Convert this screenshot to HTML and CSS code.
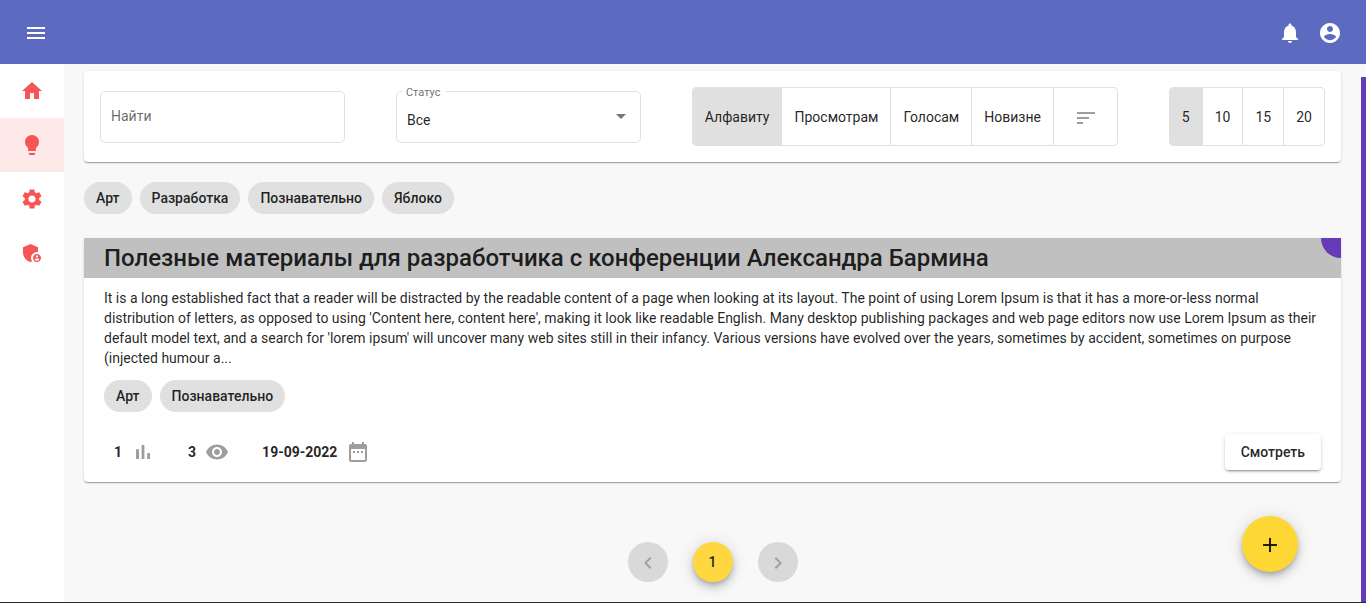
FILE: index.html
```html
<!DOCTYPE html>
<html lang="ru">
<head>
<meta charset="utf-8">
<meta name="viewport" content="width=device-width, initial-scale=1">
<title>Материалы</title>
<link rel="stylesheet" href="styles.css">
</head>
<body>
<header class="toolbar">
  <button class="icon-button" type="button" aria-label="Меню">
    <svg class="icon" viewBox="0 0 24 24"><path d="M3 18h18v-2H3v2zm0-5h18v-2H3v2zm0-7v2h18V6H3z"/></svg>
  </button>
  <div class="toolbar-actions">
    <button class="icon-button" type="button" aria-label="Уведомления">
      <svg class="icon" viewBox="0 0 24 24"><path d="M12 22c1.1 0 2-.9 2-2h-4c0 1.1.89 2 2 2zm6-6v-5c0-3.07-1.64-5.64-4.5-6.32V4c0-.83-.67-1.5-1.5-1.5s-1.5.67-1.5 1.5v.68C7.63 5.36 6 7.92 6 11v5l-2 2v1h16v-1l-2-2z"/></svg>
    </button>
    <button class="icon-button" type="button" aria-label="Профиль">
      <svg class="icon" viewBox="0 0 24 24"><path d="M12 2C6.48 2 2 6.48 2 12s4.48 10 10 10 10-4.48 10-10S17.52 2 12 2zm0 3c1.66 0 3 1.34 3 3s-1.34 3-3 3-3-1.34-3-3 1.34-3 3-3zm0 14.2c-2.5 0-4.71-1.28-6-3.22.03-1.99 4-3.08 6-3.08 1.99 0 5.97 1.09 6 3.08-1.29 1.94-3.5 3.22-6 3.22z"/></svg>
    </button>
  </div>
</header>
<div class="layout">
  <nav class="sidenav">
    <a class="sidenav-link" href="#home" aria-label="Главная">
      <svg class="icon" viewBox="0 0 24 24"><path d="M10 20v-6h4v6h5v-8h3L12 3 2 12h3v8z"/></svg>
    </a>
    <a class="sidenav-link active" href="#ideas" aria-label="Идеи">
      <svg class="icon" viewBox="0 0 24 24"><path d="M9 21c0 .55.45 1 1 1h4c.55 0 1-.45 1-1v-1H9v1zm3-19C8.14 2 5 5.14 5 9c0 2.38 1.19 4.47 3 5.74V17c0 .55.45 1 1 1h6c.55 0 1-.45 1-1v-2.26c1.81-1.27 3-3.36 3-5.74 0-3.86-3.14-7-7-7z"/></svg>
    </a>
    <a class="sidenav-link" href="#settings" aria-label="Настройки">
      <svg class="icon" viewBox="0 0 24 24"><path d="M19.14 12.94c.04-.3.06-.61.06-.94 0-.32-.02-.64-.07-.94l2.03-1.58c.18-.14.23-.41.12-.61l-1.92-3.32c-.12-.22-.37-.29-.59-.22l-2.39.96c-.5-.38-1.03-.7-1.62-.94l-.36-2.54c-.04-.24-.24-.41-.48-.41h-3.84c-.24 0-.43.17-.47.41l-.36 2.54c-.59.24-1.13.57-1.62.94l-2.39-.96c-.22-.08-.47 0-.59.22L2.74 8.87c-.12.21-.08.47.12.61l2.03 1.58c-.05.3-.09.63-.09.94s.02.64.07.94l-2.03 1.58c-.18.14-.23.41-.12.61l1.92 3.32c.12.22.37.29.59.22l2.39-.96c.5.38 1.03.7 1.62.94l.36 2.54c.05.24.24.41.48.41h3.84c.24 0 .44-.17.47-.41l.36-2.54c.59-.24 1.13-.56 1.62-.94l2.39.96c.22.08.47 0 .59-.22l1.92-3.32c.12-.22.07-.47-.12-.61l-2.01-1.58zM12 15.6c-1.98 0-3.6-1.62-3.6-3.6s1.62-3.6 3.6-3.6 3.6 1.62 3.6 3.6-1.62 3.6-3.6 3.6z"/></svg>
    </a>
    <a class="sidenav-link" href="#admin" aria-label="Администрирование">
      <svg class="icon" viewBox="0 0 24 24"><path d="M17 11c.34 0 .67.04 1 .09V6.27L10.5 3 3 6.27v4.91c0 4.54 3.2 8.79 7.5 9.82.55-.13 1.08-.32 1.6-.55-.69-.98-1.1-2.17-1.1-3.45 0-3.31 2.69-6 6-6z"/><path d="M17 13c-2.21 0-4 1.79-4 4s1.79 4 4 4 4-1.79 4-4-1.79-4-4-4zm0 1.38c.62 0 1.12.51 1.12 1.12s-.51 1.12-1.12 1.12-1.12-.51-1.12-1.12.5-1.12 1.12-1.12zm0 5.37c-.93 0-1.74-.46-2.24-1.17.05-.72 1.51-1.08 2.24-1.08s2.19.36 2.24 1.08c-.5.71-1.31 1.17-2.24 1.17z"/></svg>
    </a>
  </nav>
  <main class="content">
    <form class="card filters">
      <div class="field">
        <input class="field-control" type="search" placeholder="Найти" aria-label="Найти">
      </div>
      <div class="field">
        <label class="field-label" for="status">Статус</label>
        <select class="field-control field-select" id="status"><option>Все</option></select>
        <svg class="field-arrow" viewBox="0 0 10 5"><path d="M0 0h10L5 5z"/></svg>
      </div>
      <div class="toggle-group">
        <button class="toggle selected" type="button">Алфавиту</button>
        <button class="toggle" type="button">Просмотрам</button>
        <button class="toggle" type="button">Голосам</button>
        <button class="toggle" type="button">Новизне</button>
        <button class="toggle toggle-sort" type="button" aria-label="Порядок сортировки">
          <svg class="icon" viewBox="0 0 24 24"><path d="M3 18h6v-2H3v2zM3 6v2h18V6H3zm0 7h12v-2H3v2z"/></svg>
        </button>
      </div>
      <div class="toggle-group">
        <button class="toggle selected" type="button">5</button>
        <button class="toggle" type="button">10</button>
        <button class="toggle" type="button">15</button>
        <button class="toggle" type="button">20</button>
      </div>
    </form>
    <div class="chips">
      <button class="chip" type="button">Арт</button>
      <button class="chip" type="button">Разработка</button>
      <button class="chip" type="button">Познавательно</button>
      <button class="chip" type="button">Яблоко</button>
    </div>
    <article class="card post">
      <div class="post-header">
        <h2 class="post-title">Полезные материалы для разработчика с конференции Александра Бармина</h2>
        <span class="post-corner"></span>
      </div>
      <div class="post-body">
        <p class="post-text">It is a long established fact that a reader will be distracted by the readable content of a page when looking at its layout. The point of using Lorem Ipsum is that it has a more-or-less normal distribution of letters, as opposed to using 'Content here, content here', making it look like readable English. Many desktop publishing packages and web page editors now use Lorem Ipsum as their default model text, and a search for 'lorem ipsum' will uncover many web sites still in their infancy. Various versions have evolved over the years, sometimes by accident, sometimes on purpose (injected humour a...</p>
        <div class="chips">
          <button class="chip" type="button">Арт</button>
          <button class="chip" type="button">Познавательно</button>
        </div>
        <div class="post-footer">
          <div class="stats">
            <span class="stat">1
              <svg class="icon" viewBox="0 0 24 24"><path d="M5 9.2h3V19H5V9.2zM10.6 5h2.8v14h-2.8V5zm5.6 8H19v6h-2.8v-6z"/></svg>
            </span>
            <span class="stat">3
              <svg class="icon" viewBox="0 0 24 24"><path d="M12 4.5C7 4.5 2.73 7.61 1 12c1.73 4.39 6 7.5 11 7.5s9.27-3.11 11-7.5c-1.73-4.39-6-7.5-11-7.5zM12 17c-2.76 0-5-2.24-5-5s2.24-5 5-5 5 2.24 5 5-2.24 5-5 5zm0-8c-1.66 0-3 1.34-3 3s1.34 3 3 3 3-1.34 3-3-1.34-3-3-3z"/></svg>
            </span>
            <span class="stat">19-09-2022
              <svg class="icon" viewBox="0 0 24 24"><path d="M9 11H7v2h2v-2zm4 0h-2v2h2v-2zm4 0h-2v2h2v-2zm2-7h-1V2h-2v2H8V2H6v2H5c-1.11 0-1.99.9-1.99 2L3 20c0 1.1.89 2 2 2h14c1.1 0 2-.9 2-2V6c0-1.1-.9-2-2-2zm0 16H5V9h14v11z"/></svg>
            </span>
          </div>
          <button class="raised-button" type="button">Смотреть</button>
        </div>
      </div>
    </article>
    <nav class="pagination" aria-label="Страницы">
      <button class="page-button" type="button" disabled aria-label="Назад">
        <svg class="icon" viewBox="0 0 24 24"><path d="M15.41 7.41 14 6l-6 6 6 6 1.41-1.41L10.83 12z"/></svg>
      </button>
      <button class="page-button current" type="button">1</button>
      <button class="page-button" type="button" disabled aria-label="Вперёд">
        <svg class="icon" viewBox="0 0 24 24"><path d="M10 6 8.59 7.41 13.17 12l-4.58 4.59L10 18l6-6z"/></svg>
      </button>
    </nav>
    <button class="fab" type="button" aria-label="Добавить">
      <svg class="icon" viewBox="0 0 24 24"><path d="M19 13h-6v6h-2v-6H5v-2h6V5h2v6h6v2z"/></svg>
    </button>
  </main>
  <div class="scroll-thumb"></div>
</div>
</body>
</html>
```

FILE: styles.css
```css
* {
  box-sizing: border-box;
}

body {
  margin: 0;
  min-height: 100vh;
  display: flex;
  flex-direction: column;
  background: #f8f8f8;
  border-bottom: 1px solid #1e2d38;
  color: rgba(0, 0, 0, 0.87);
  font: 400 14px/20px Roboto, "Noto Sans", sans-serif;
}

button,
input,
select {
  font: inherit;
  color: inherit;
}

button {
  margin: 0;
  padding: 0;
  border: 0;
  background: none;
  cursor: pointer;
}

.icon {
  display: block;
  flex: none;
  width: 24px;
  height: 24px;
  fill: currentColor;
}

.toolbar {
  display: flex;
  align-items: center;
  justify-content: space-between;
  height: 64px;
  padding: 2px 16px 0;
  background: #5c6bc0;
  color: #fff;
}

.toolbar-actions {
  display: flex;
}

.icon-button {
  display: grid;
  place-items: center;
  width: 40px;
  height: 40px;
}

.layout {
  flex: 1;
  display: flex;
}

.sidenav {
  flex: none;
  width: 64px;
  background: #fff;
}

.sidenav-link {
  display: grid;
  place-items: center;
  height: 54px;
  color: #f65555;
}

.sidenav-link.active {
  background: #fee9e9;
}

.content {
  position: relative;
  flex: 1;
  min-width: 0;
  padding: 7px 20px 20px;
}

.scroll-thumb {
  flex: none;
  width: 5px;
  margin-top: 13px;
  background: #673ab7;
}

.card {
  background: #fff;
  border-radius: 4px;
  box-shadow: 0 2px 1px -1px rgba(0, 0, 0, 0.2), 0 1px 1px rgba(0, 0, 0, 0.14), 0 1px 3px rgba(0, 0, 0, 0.12);
}

.filters {
  display: flex;
  align-items: center;
  justify-content: space-between;
  padding: 16px;
}

.field {
  position: relative;
  width: 20%;
}

.field-control {
  display: block;
  width: 100%;
  height: 52px;
  margin: 0;
  padding: 0 10px 2px;
  border: 1px solid #e0e0e0;
  border-radius: 5px;
  background: #fff;
  outline: 0;
  appearance: none;
}

.field-control::placeholder {
  color: rgba(0, 0, 0, 0.6);
  opacity: 1;
}

.field-select {
  padding-top: 6px;
  padding-bottom: 0;
}

.field-label {
  position: absolute;
  top: -7px;
  left: 6px;
  padding: 0 6px 0 4px;
  background: #fff;
  color: rgba(0, 0, 0, 0.6);
  font-size: 11px;
  line-height: 18px;
}

.field-arrow {
  position: absolute;
  top: 23px;
  right: 15px;
  width: 10px;
  height: 5px;
  fill: #757575;
  pointer-events: none;
}

.toggle-group {
  display: flex;
  border: 1px solid #e0e0e0;
  border-radius: 4px;
  overflow: hidden;
}

.toggle {
  height: 57px;
  padding: 0 12px;
}

.toggle + .toggle {
  border-left: 1px solid #e0e0e0;
}

.toggle.selected {
  background: #e0e0e0;
}

.toggle.toggle-sort {
  padding: 2px 19px 0 20px;
  color: #9e9e9e;
}

.chips {
  display: flex;
  flex-wrap: wrap;
  gap: 8px;
}

.filters + .chips {
  margin: 20px 0 24px;
}

.chip {
  height: 32px;
  padding: 0 12px;
  border-radius: 16px;
  background: #e0e0e0;
  font-weight: 500;
}

.post-header {
  position: relative;
  padding: 4px 20px;
  background: #c0c0c0;
  overflow: hidden;
}

.post-title {
  margin: 0;
  font-size: 24px;
  line-height: 32px;
  font-weight: 500;
}

.post-corner {
  position: absolute;
  top: -20px;
  right: -20px;
  width: 40px;
  height: 40px;
  border-radius: 50%;
  background: #673ab7;
}

.post-body {
  padding: 10px 20px 12px;
}

.post-text {
  margin: 0 0 12px;
}

.post-footer {
  display: flex;
  align-items: center;
  justify-content: space-between;
  margin-top: 22px;
}

.stats {
  display: flex;
  gap: 33px;
  padding-left: 10px;
}

.stat {
  display: flex;
  align-items: center;
  gap: 9px;
  font-weight: 700;
}

.stat .icon {
  fill: #9e9e9e;
}

.raised-button {
  height: 36px;
  padding: 0 16px;
  border-radius: 4px;
  background: #fff;
  font-weight: 500;
  box-shadow: 0 3px 1px -2px rgba(0, 0, 0, 0.2), 0 2px 2px rgba(0, 0, 0, 0.14), 0 1px 5px rgba(0, 0, 0, 0.12);
}

.pagination {
  display: flex;
  justify-content: center;
  gap: 25px;
  margin-top: 60px;
}

.page-button {
  display: grid;
  place-items: center;
  width: 40px;
  height: 40px;
  border-radius: 50%;
  background: #d9d9d9;
  font-weight: 500;
}

.page-button:disabled {
  padding-top: 2px;
  color: #a0a0a0;
}

.page-button.current {
  background: #ffd740;
}

.page-button.current,
.fab {
  box-shadow: 0 3px 5px -1px rgba(0, 0, 0, 0.2), 0 6px 10px rgba(0, 0, 0, 0.14), 0 1px 18px rgba(0, 0, 0, 0.12);
}

.fab {
  position: absolute;
  right: 63px;
  bottom: 30px;
  display: grid;
  place-items: center;
  width: 56px;
  height: 56px;
  padding-top: 2px;
  border-radius: 50%;
  background: #fdd835;
}
```
